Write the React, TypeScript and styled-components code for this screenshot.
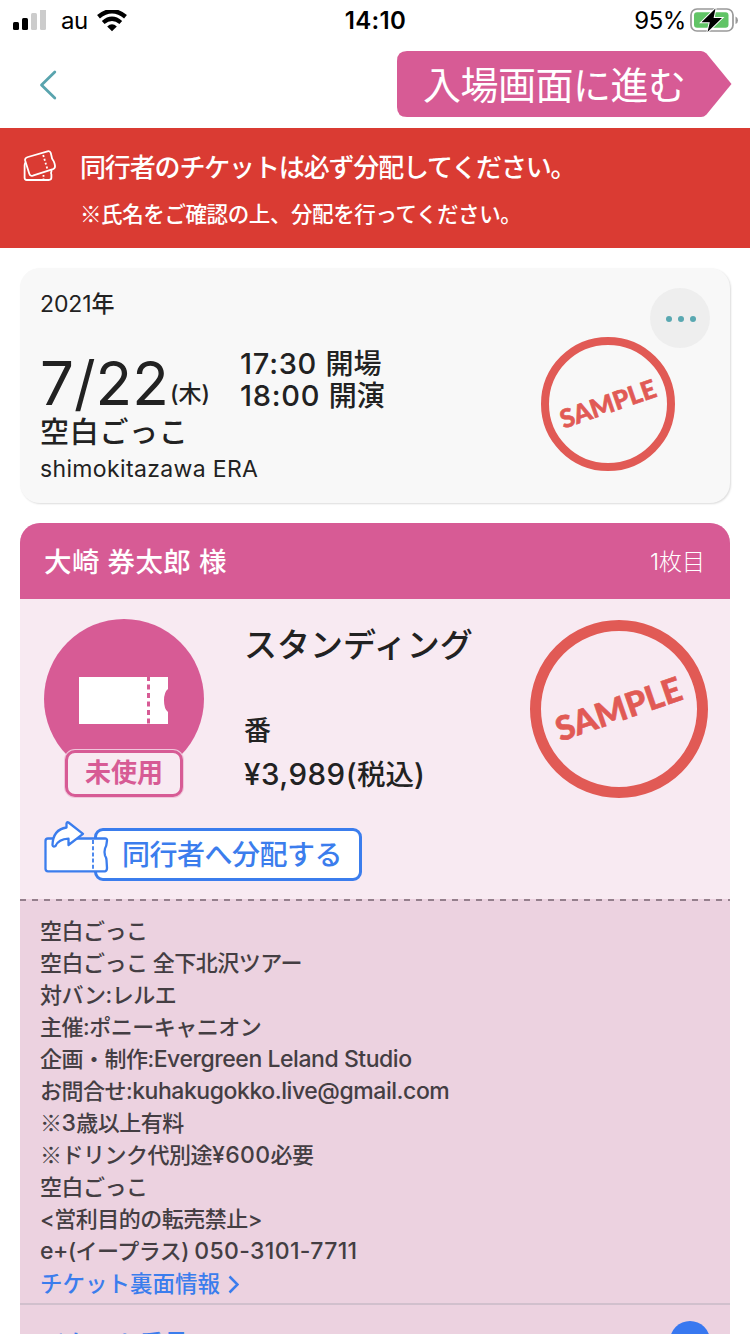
import React from "react";
import styled, { createGlobalStyle } from "styled-components";

const pink = "#d75b95";
const blue = "#3b7ded";

const GlobalStyle = createGlobalStyle`
  * { box-sizing: border-box; }
  body {
    margin: 0;
    background: #fff;
    color: #222;
    font-family: Inter, "Noto Sans CJK JP", sans-serif;
    font-weight: 500;
  }
`;

const Screen = styled.div`
  width: 750px;
  height: 1334px;
  overflow: hidden;
  display: flex;
  flex-direction: column;
`;

const Label = styled.span<{ $size: number; $line?: number; $weight?: number; $track?: number; $color?: string }>`
  display: block;
  flex: none;
  white-space: pre;
  height: ${(p) => p.$line ?? 32}px;
  font-size: ${(p) => p.$size}px;
  line-height: ${(p) => p.$line ?? 32}px;
  font-weight: ${(p) => p.$weight ?? 500};
  letter-spacing: ${(p) => p.$track ?? 0}px;
  color: ${(p) => p.$color ?? "inherit"};
`;

const Run = styled.span<{ $track: number; $weight?: number; $size?: number }>`
  letter-spacing: ${(p) => p.$track}px;
  font-weight: ${(p) => p.$weight ?? "inherit"};
  font-size: ${(p) => (p.$size ? `${p.$size}px` : "inherit")};
  line-height: 1;
`;

const ReferenceMark = styled.span`
  font-family: "Noto Sans CJK JP", sans-serif;
  font-weight: 300;
  line-height: 1;
`;

const StatusBar = styled.header`
  height: 40px;
  flex: none;
  display: grid;
  grid-template-columns: 1fr auto 1fr;
  align-items: center;
  padding: 1px 12px 0 13px;
  color: #000;
`;

const StatusGroup = styled.div<{ $end?: boolean }>`
  display: flex;
  align-items: center;
  justify-content: ${(p) => (p.$end ? "flex-end" : "flex-start")};
`;

const CarrierName = styled.div`
  margin: 0 9px 0 14px;
`;

const BatteryLevel = styled.div`
  margin-right: 3px;
`;

const NavBar = styled.nav`
  height: 88px;
  flex: none;
  display: flex;
  justify-content: space-between;
  padding: 10px 18px 0 39px;
`;

const BackButton = styled.button`
  border: 0;
  padding: 20px 0 0;
  background: none;
  display: flex;
  align-items: flex-start;
`;

const EnterButton = styled.button`
  position: relative;
  width: 335px;
  height: 68px;
  border: 0;
  padding: 0 0 0 26px;
  background: none;
  font-family: inherit;
  color: #fff;
  text-align: left;
`;

const EnterShape = styled.svg`
  position: absolute;
  inset: 0;
`;

const EnterText = styled.div`
  position: relative;
  padding-top: 1px;
`;

const Notice = styled.section`
  height: 120px;
  flex: none;
  display: flex;
  gap: 23px;
  padding: 21px 0 0 23px;
  background: #da3b33;
  color: #fff;
`;

const NoticeLines = styled.div`
  display: flex;
  flex-direction: column;
  gap: 11px;
`;

const EventCard = styled.section`
  height: 235px;
  flex: none;
  margin: 20px 20px 0;
  padding: 20px 20px 0;
  display: flex;
  justify-content: space-between;
  border-radius: 20px;
  background: #f8f8f8;
  box-shadow: 1px 1px 2px rgba(0, 0, 0, 0.14);
`;

const EventInfo = styled.div`
  display: flex;
  flex-direction: column;
`;

const DateRow = styled.div`
  display: flex;
  height: 64px;
  margin: 28px 0 1px;
  align-items: flex-end;
`;

const DayNumber = styled.div`
  width: 127px;
  margin-bottom: -1px;
`;

const Weekday = styled.div`
  margin: 0 0 6px 3px;
  width: 70px;
`;

const Times = styled.div`
  display: flex;
  flex-direction: column;
`;

const EventSide = styled.div`
  width: 169px;
  display: flex;
  flex-direction: column;
`;

const MoreButton = styled.button`
  align-self: flex-end;
  width: 60px;
  height: 60px;
  border: 0;
  border-radius: 50%;
  padding: 2px 0 0 2px;
  display: flex;
  align-items: center;
  justify-content: center;
  gap: 5.500px;
  background: #eee;
`;

const Dot = styled.i`
  width: 6.500px;
  height: 6.500px;
  border-radius: 50%;
  background: #59a8b1;
`;

const Stamp = styled.div<{ $size: number; $ring: number; $top: number }>`
  flex: none;
  width: ${(p) => p.$size}px;
  height: ${(p) => p.$size}px;
  margin-top: ${(p) => p.$top}px;
  border: ${(p) => p.$ring}px solid #e15a55;
  border-radius: 50%;
  display: flex;
  align-items: center;
  justify-content: center;
  color: #e15a55;
`;

const StampText = styled.span<{ $size: number }>`
  font-family: Lato, sans-serif;
  font-weight: 900;
  font-size: ${(p) => p.$size}px;
  line-height: 1;
  -webkit-text-stroke: 0.6px #e15a55;
  transform: rotate(-19deg);
`;

const Ticket = styled.section`
  flex: 1;
  margin: 20px 20px 0;
  display: flex;
  flex-direction: column;
  border-radius: 20px 20px 0 0;
  overflow: hidden;
  background: #ecd2e0;
`;

const TicketHeader = styled.header`
  height: 76px;
  flex: none;
  display: flex;
  justify-content: space-between;
  align-items: center;
  padding: 1px 25px 0 24px;
  background: ${pink};
  color: #fff;
`;

const TicketBody = styled.div`
  height: 300px;
  flex: none;
  display: flex;
  flex-direction: column;
  padding: 20px 22px 0 24px;
  background: #f8eaf2;
`;

const SeatRow = styled.div`
  height: 202px;
  display: flex;
`;

const SeatInfo = styled.div`
  flex: 1;
  padding: 6px 0 0 40px;
`;

const SeatNumber = styled.div`
  margin: 50px 0 12px;
`;

const StatusBadge = styled.div`
  width: 160px;
  display: flex;
  flex-direction: column;
  align-items: center;
`;

const StatusDisc = styled.div`
  width: 160px;
  height: 160px;
  border-radius: 50%;
  display: flex;
  justify-content: center;
  padding: 58px 1px 0 0;
  background: ${pink};
`;

const StatusTag = styled.div`
  width: 118px;
  height: 47px;
  margin-top: -29px;
  display: flex;
  justify-content: center;
  border: 3px solid ${pink};
  border-radius: 10px;
  background: #f8eaf2;
  box-shadow: 0 0 0 1px #f0c6db;
  color: ${pink};
`;

const ShareRow = styled.button`
  display: flex;
  border: 0;
  padding: 0;
  background: none;
  font-family: inherit;
  color: ${blue};
`;

const ShareIcon = styled.svg`
  position: relative;
  flex: none;
  margin-right: -16px;
`;

const ShareBox = styled.div`
  width: 268px;
  height: 53px;
  margin-top: 7px;
  padding: 1px 0 0 25px;
  display: flex;
  align-items: center;
  border: 3px solid ${blue};
  border-radius: 9px;
  background: #fff;
`;

const Perforation = styled.div`
  height: 2px;
  flex: none;
  background: repeating-linear-gradient(90deg, #947f8c 0 6px, transparent 6px 12px);
`;

const Details = styled.div`
  height: 402px;
  flex: none;
  padding: 14px 20px 0;
  color: #443e43;
`;

const BackInfo = styled.a`
  display: flex;
  align-items: center;
  gap: 8px;
  margin-top: 1px;
  color: ${blue};
`;

const NumberRow = styled.div`
  flex: 1;
  display: flex;
  align-items: flex-start;
  border-top: 2px solid #d1c0cd;
  padding: 16px 20px 0;
`;

const NumberLabel = styled.div`
  flex: 1;
  padding: 5px 0 0 3px;
`;

const ToggleDisc = styled.div`
  width: 40px;
  height: 40px;
  flex: none;
  border-radius: 50%;
  background: #3878f0;
`;

const details = [
  "空白ごっこ",
  "空白ごっこ 全下北沢ツアー",
  "対バン:レルエ",
  "主催:ポニーキャニオン",
  "企画・制作:Evergreen Leland Studio",
  "お問合せ:kuhakugokko.live@gmail.com",
  "※3歳以上有料",
  "※ドリンク代別途¥600必要",
  "空白ごっこ",
  "<営利目的の転売禁止>",
  "e+(イープラス) 050-3101-7711",
];

// Splits a line so that Latin words, numbers and kana/kanji each get their own tracking.
const MixedText = ({ text }: { text: string }) => (
  <>
    {text.split(/(※|[A-Za-z@.+][A-Za-z@.+ ]*|[¥0-9][0-9-]*)/).map((part, i) => {
      if (part === "※") return <ReferenceMark key={i}>{part}</ReferenceMark>;
      if (/^[A-Za-z@.+]/.test(part)) return <Run key={i} $track={-0.45} $size={23} $weight={450}>{part}</Run>;
      if (/^[¥0-9]/.test(part)) return <Run key={i} $track={0.35} $size={23} $weight={450}>{part}</Run>;
      return part;
    })}
  </>
);

const SignalIcon = () => (
  <svg width="34" height="22" viewBox="0 0 34 22">
    <rect x="0" y="12" width="6" height="8" rx="1.5" fill="#000" />
    <rect x="9" y="8" width="6" height="12" rx="1.5" fill="#000" />
    <rect x="18" y="3" width="6" height="17" rx="1.5" fill="#ccc" />
    <rect x="27" y="-1" width="6" height="21" rx="1.5" fill="#ccc" />
  </svg>
);

const WifiIcon = () => (
  <svg width="30" height="22" viewBox="0 0 30 22">
    <path d="M1.500 6.800Q15-4.500 28.500 6.800" fill="none" stroke="#000" strokeWidth="4.400" />
    <path d="M6.200 12.500Q15 5 23.800 12.500" fill="none" stroke="#000" strokeWidth="4.200" />
    <path d="M10.200 16.500Q15 12 19.800 16.500L15 21.300Z" fill="#000" />
  </svg>
);

const BatteryIcon = () => (
  <svg width="49" height="26" viewBox="0 0 49 26">
    <rect x="2" y="1" width="42" height="22" rx="6" fill="#fff" stroke="#999" strokeWidth="1.700" />
    <rect x="5" y="4.300" width="34.500" height="15.400" rx="3" fill="#61c466" />
    <path d="M46.500 8.500q2.500 1 2.500 3.800t-2.500 3.800z" fill="#999" />
    <path d="M26.500.5L12.500 14.300h8.300l-2.300 9.700L33 10h-8.400z" fill="#000" stroke="#fff" strokeWidth="2" paintOrder="stroke" />
  </svg>
);

const TicketsIcon = () => (
  <svg width="34" height="36" viewBox="0 0 34 36" fill="none" stroke="#fff" strokeWidth="1.800" strokeLinejoin="round">
    <path d="M5 8L24.500 2.300q2.500-.7 3.300 1.800l.9 3.700q.2 1.800.9 2.700 1.500 2 1.900 3.900l.5 2.400q.3 2.400-2 3.300L9.800 26.600q-2.700.8-3.500-1.900L2.200 11.800Q1.500 9 5 8z" />
    <path d="M2.500 13.500q-.9 1.500-.9 3v12.300q0 2.200 2.200 2.200h21.900q2.700 0 2.700-2.400v-3q-.8-1.500 0-3.200v-1.600" />
    <path d="M20.200 6l4.300 14.500" strokeDasharray="2 2" />
    <path d="M20.500 26v4" strokeDasharray="1.800 1.800" />
  </svg>
);

const TicketIcon = () => (
  <svg width="89" height="47" viewBox="0 0 89 47">
    <path d="M0 0h89v12q-4 3-4 11.500t4 11.500v12H0z" fill="#fff" />
    <path d="M69.500 0v47" stroke={pink} strokeWidth="3" strokeDasharray="5 3.500" strokeDashoffset="1" />
  </svg>
);

const App = () => (
  <>
    <GlobalStyle />
    <Screen>
      <StatusBar>
        <StatusGroup>
          <SignalIcon />
          <CarrierName>
            <Label $size={24} $weight={400} $track={-0.5}>au</Label>
          </CarrierName>
          <WifiIcon />
        </StatusGroup>
        <Label $size={24} $weight={600} $track={0.3}>14:10</Label>
        <StatusGroup $end>
          <BatteryLevel>
            <Label $size={24} $weight={400} $track={-0.4}>95%</Label>
          </BatteryLevel>
          <BatteryIcon />
        </StatusGroup>
      </StatusBar>

      <NavBar>
        <BackButton aria-label="back">
          <svg width="18" height="30" viewBox="0 0 18 30">
            <path d="M15.800 2L2.500 15l13.300 13" fill="none" stroke="#59a4ae" strokeWidth="2.800" strokeLinecap="round" strokeLinejoin="round" />
          </svg>
        </BackButton>
        <EnterButton>
          <EnterShape width="335" height="68" viewBox="0 0 335 68">
            <path d="M10 1h294q3 0 5.500 2.500L334.500 34 309.500 64.500Q307 67 304 67H10Q0 67 0 57V11Q0 1 10 1z" fill={pink} />
          </EnterShape>
          <EnterText>
            <Label $size={38} $line={68} $weight={400} $track={-0.5}>入場画面に進む</Label>
          </EnterText>
        </EnterButton>
      </NavBar>

      <Notice>
        <TicketsIcon />
        <NoticeLines>
          <Label $size={26} $line={37} $track={-1.15}>同行者のチケットは必ず分配してください。</Label>
          <Label $size={21.500} $line={34} $track={-0.4}>
            <MixedText text="※氏名をご確認の上、分配を行ってください。" />
          </Label>
        </NoticeLines>
      </Notice>

      <EventCard>
        <EventInfo>
          <Label $size={23} $weight={450}>
            <Run $track={-0.1} $weight={400}>2021</Run>年
          </Label>
          <DateRow>
            <DayNumber>
              <Label $size={60} $line={60} $weight={420}>7/22</Label>
            </DayNumber>
            <Weekday>
              <Label $size={23} $line={24} $weight={450}>(木)</Label>
            </Weekday>
            <Times>
              <Label $size={28} $line={32}><Run $track={0.75} $size={29}>17:30 </Run>開場</Label>
              <Label $size={28} $line={32}><Run $track={0.75} $size={29}>18:00 </Run>開演</Label>
            </Times>
          </DateRow>
          <Label $size={29} $line={40} $track={0.7}>空白ごっこ</Label>
          <Label $size={23} $line={32} $weight={400} $track={0.35}>shimokitazawa ERA</Label>
        </EventInfo>
        <EventSide>
          <MoreButton aria-label="more">
            <Dot />
            <Dot />
            <Dot />
          </MoreButton>
          <Stamp $size={134} $ring={8} $top={-11}>
            <StampText $size={25.500}>SAMPLE</StampText>
          </Stamp>
        </EventSide>
      </EventCard>

      <Ticket>
        <TicketHeader>
          <Label $size={27.500} $line={40} $track={0.4}>大崎 券太郎 様</Label>
          <Label $size={23} $line={40} $weight={300}>1枚目</Label>
        </TicketHeader>
        <TicketBody>
          <SeatRow>
            <StatusBadge>
              <StatusDisc>
                <TicketIcon />
              </StatusDisc>
              <StatusTag>
                <Label $size={26} $line={39} $weight={700}>未使用</Label>
              </StatusTag>
            </StatusBadge>
            <SeatInfo>
              <Label $size={33} $line={40}>スタンディング</Label>
              <SeatNumber>
                <Label $size={27} $line={32}>番</Label>
              </SeatNumber>
              <Label $size={28.500} $line={32} $weight={450}><Run $track={0.5} $size={29.500}>¥3,989(</Run>税込<Run $track={0} $size={29.500}>)</Run></Label>
            </SeatInfo>
            <Stamp $size={178} $ring={11} $top={1}>
              <StampText $size={33.500}>SAMPLE</StampText>
            </Stamp>
          </SeatRow>
          <ShareRow>
            <ShareIcon width="66" height="54" viewBox="0 0 66 54" fill="#fff" stroke={blue} strokeWidth="2.300" strokeLinejoin="round">
              <path d="M4 17.500h57q2.200 0 2 2l-.5 3.500q0 2-1.500 4.500-1 3.500 0 7 1.500 2.500 1.500 4.500l.5 8q0 3-2 3.300H4q-2.500 0-2.500-2.500V20q0-2.500 2.500-2.500z" />
              <path d="M49 19v31" strokeWidth="1.800" strokeDasharray="4 2.200" />
              <path d="M24.500 1.500L39 12.800 24.500 24v-6.300q-10 .5-13 7.300-2.500 1.500-3-1Q9 8.500 22.500 6.500V2.500q.5-1.800 2-1z" />
            </ShareIcon>
            <ShareBox>
              <Label $size={28} $line={40} $track={-0.5}>同行者へ分配する</Label>
            </ShareBox>
          </ShareRow>
        </TicketBody>
        <Perforation />
        <Details>
          {details.map((text, i) => (
            <Label key={i} $size={22} $line={32} $track={-0.5}>
              <MixedText text={text} />
            </Label>
          ))}
          <BackInfo>
            <Label $size={22.500} $line={32}>チケット裏面情報</Label>
            <svg width="11" height="19" viewBox="0 0 11 19">
              <path d="M1.500 1.500l8 8-8 8" fill="none" stroke={blue} strokeWidth="2.500" />
            </svg>
          </BackInfo>
        </Details>
        <NumberRow>
          <NumberLabel>
            <Label $size={24} $line={36} $track={0.2} $color={blue}>チケット番号</Label>
          </NumberLabel>
          <ToggleDisc />
        </NumberRow>
      </Ticket>
    </Screen>
  </>
);

export default App;
